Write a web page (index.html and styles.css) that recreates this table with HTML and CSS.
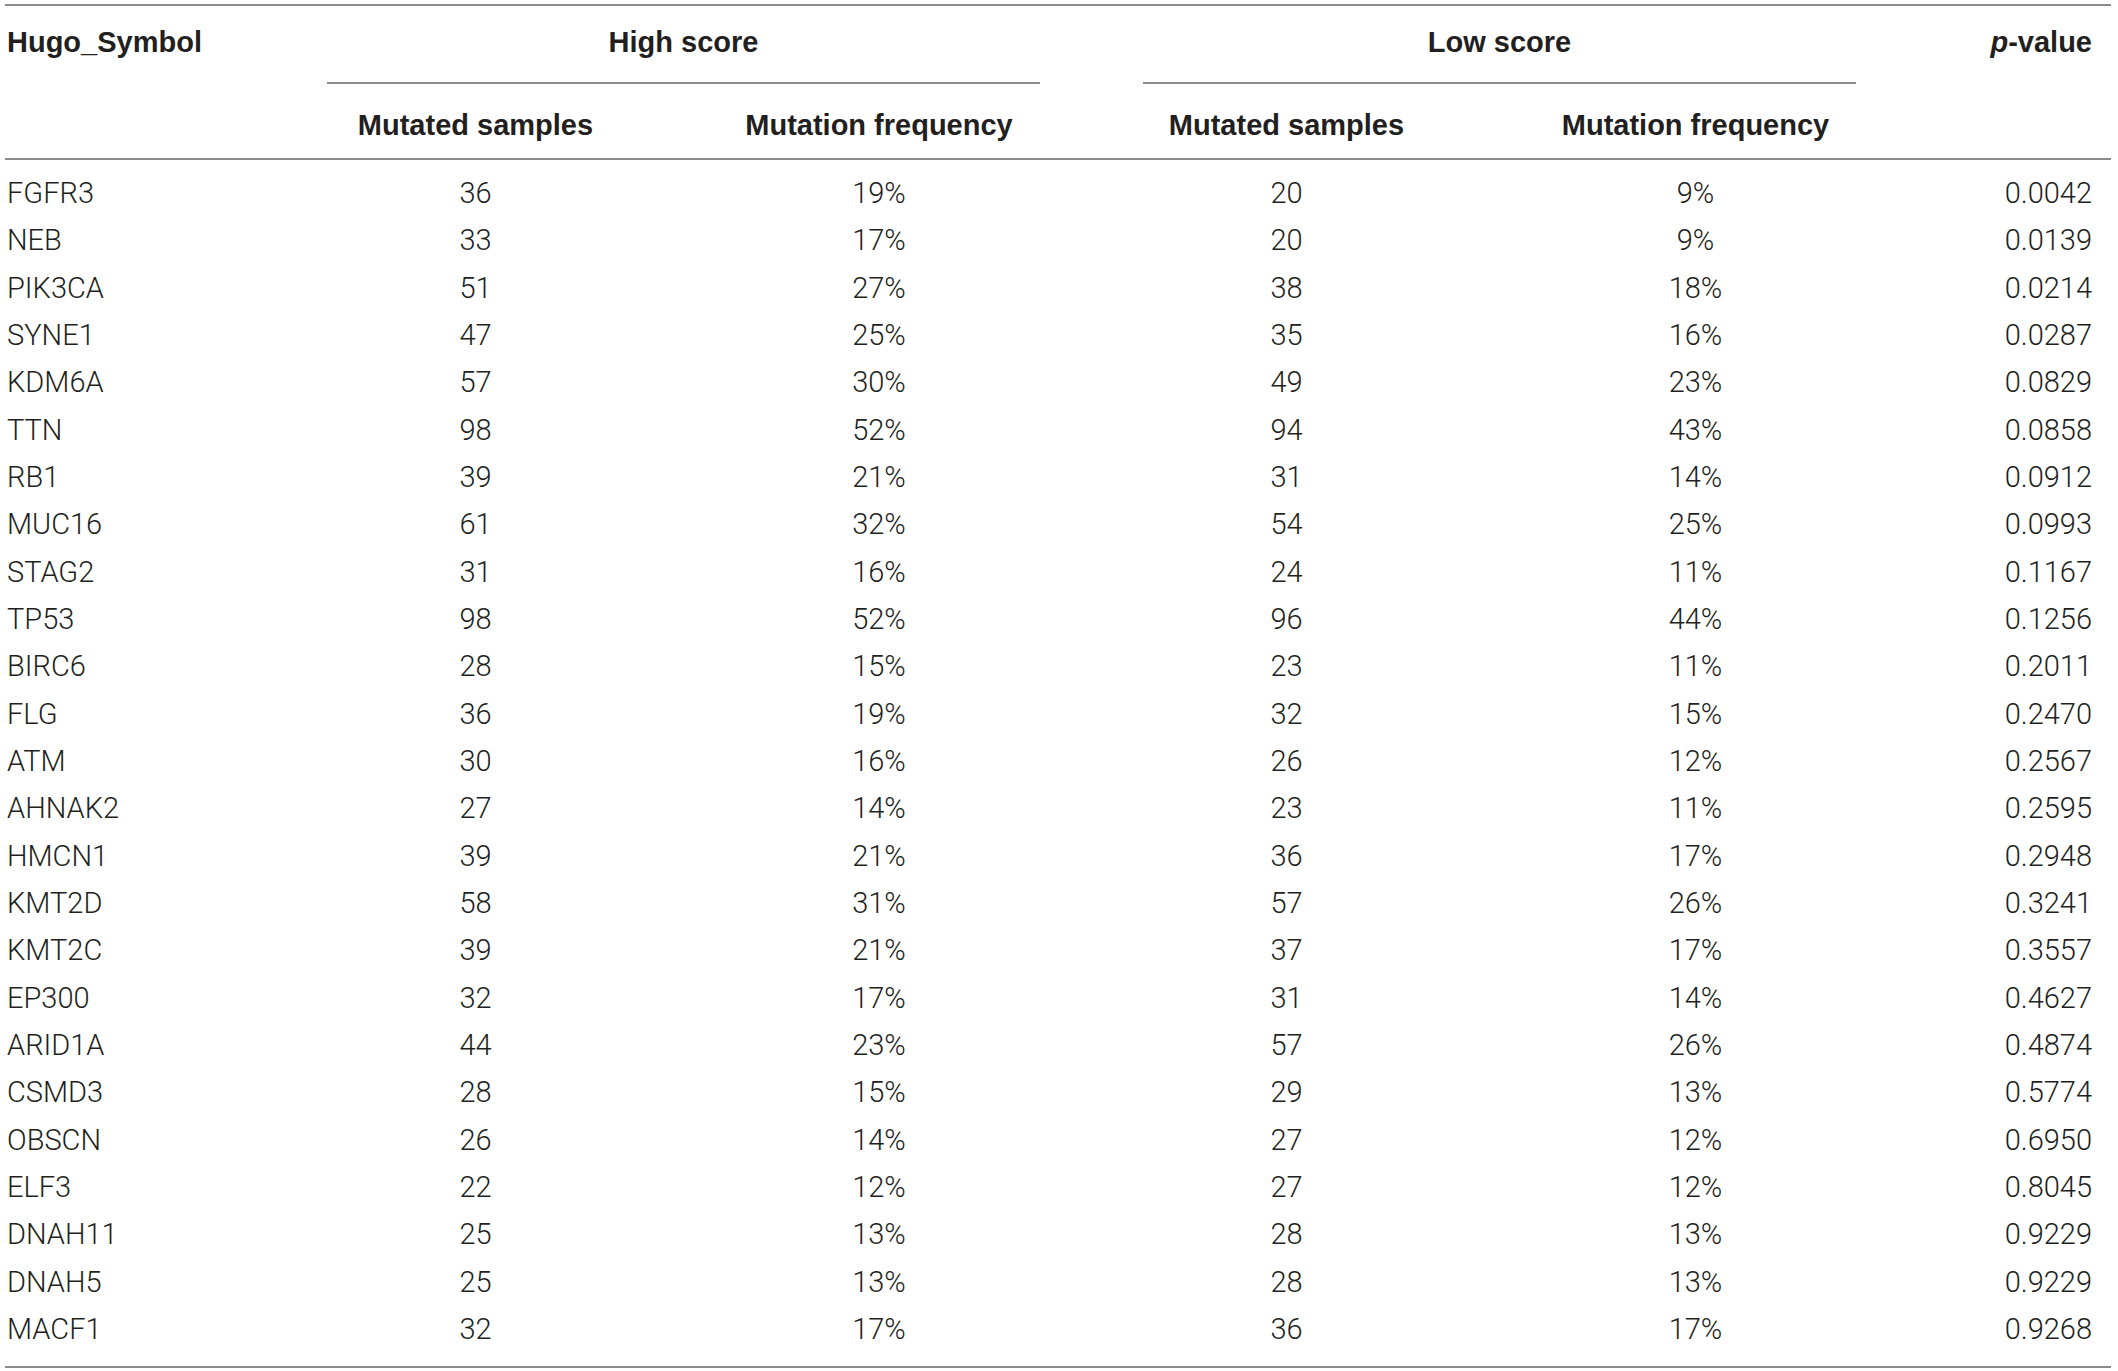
FILE: index.html
```html
<!DOCTYPE html>
<html lang="en">
<head>
    <meta charset="UTF-8">
    <meta name="viewport" content="width=device-width, initial-scale=1.0">
    <title>Mutation table</title>
    <link rel="stylesheet" href="styles.css">
</head>
<body>
    <table class="mut-table">
        <colgroup>
            <col class="col-gene">
            <col class="col-hi-n">
            <col class="col-hi-f">
            <col class="col-lo-n">
            <col class="col-lo-f">
            <col class="col-p">
        </colgroup>
        <thead>
            <tr class="head-top">
                <th class="gene" rowspan="2">Hugo_Symbol</th>
                <th colspan="2" class="group"><div class="group-rule group-high">High score</div></th>
                <th colspan="2" class="group"><div class="group-rule group-low">Low score</div></th>
                <th class="pval" rowspan="2"><i>p</i>-value</th>
            </tr>
            <tr class="head-sub">
                <th>Mutated samples</th>
                <th>Mutation frequency</th>
                <th>Mutated samples</th>
                <th>Mutation frequency</th>
            </tr>
        </thead>
        <tbody>
            <tr><td class="gene">FGFR3</td><td>36</td><td>19%</td><td>20</td><td>9%</td><td class="pval">0.0042</td></tr>
            <tr><td class="gene">NEB</td><td>33</td><td>17%</td><td>20</td><td>9%</td><td class="pval">0.0139</td></tr>
            <tr><td class="gene">PIK3CA</td><td>51</td><td>27%</td><td>38</td><td>18%</td><td class="pval">0.0214</td></tr>
            <tr><td class="gene">SYNE1</td><td>47</td><td>25%</td><td>35</td><td>16%</td><td class="pval">0.0287</td></tr>
            <tr><td class="gene">KDM6A</td><td>57</td><td>30%</td><td>49</td><td>23%</td><td class="pval">0.0829</td></tr>
            <tr><td class="gene">TTN</td><td>98</td><td>52%</td><td>94</td><td>43%</td><td class="pval">0.0858</td></tr>
            <tr><td class="gene">RB1</td><td>39</td><td>21%</td><td>31</td><td>14%</td><td class="pval">0.0912</td></tr>
            <tr><td class="gene">MUC16</td><td>61</td><td>32%</td><td>54</td><td>25%</td><td class="pval">0.0993</td></tr>
            <tr><td class="gene">STAG2</td><td>31</td><td>16%</td><td>24</td><td>11%</td><td class="pval">0.1167</td></tr>
            <tr><td class="gene">TP53</td><td>98</td><td>52%</td><td>96</td><td>44%</td><td class="pval">0.1256</td></tr>
            <tr><td class="gene">BIRC6</td><td>28</td><td>15%</td><td>23</td><td>11%</td><td class="pval">0.2011</td></tr>
            <tr><td class="gene">FLG</td><td>36</td><td>19%</td><td>32</td><td>15%</td><td class="pval">0.2470</td></tr>
            <tr><td class="gene">ATM</td><td>30</td><td>16%</td><td>26</td><td>12%</td><td class="pval">0.2567</td></tr>
            <tr><td class="gene">AHNAK2</td><td>27</td><td>14%</td><td>23</td><td>11%</td><td class="pval">0.2595</td></tr>
            <tr><td class="gene">HMCN1</td><td>39</td><td>21%</td><td>36</td><td>17%</td><td class="pval">0.2948</td></tr>
            <tr><td class="gene">KMT2D</td><td>58</td><td>31%</td><td>57</td><td>26%</td><td class="pval">0.3241</td></tr>
            <tr><td class="gene">KMT2C</td><td>39</td><td>21%</td><td>37</td><td>17%</td><td class="pval">0.3557</td></tr>
            <tr><td class="gene">EP300</td><td>32</td><td>17%</td><td>31</td><td>14%</td><td class="pval">0.4627</td></tr>
            <tr><td class="gene">ARID1A</td><td>44</td><td>23%</td><td>57</td><td>26%</td><td class="pval">0.4874</td></tr>
            <tr><td class="gene">CSMD3</td><td>28</td><td>15%</td><td>29</td><td>13%</td><td class="pval">0.5774</td></tr>
            <tr><td class="gene">OBSCN</td><td>26</td><td>14%</td><td>27</td><td>12%</td><td class="pval">0.6950</td></tr>
            <tr><td class="gene">ELF3</td><td>22</td><td>12%</td><td>27</td><td>12%</td><td class="pval">0.8045</td></tr>
            <tr><td class="gene">DNAH11</td><td>25</td><td>13%</td><td>28</td><td>13%</td><td class="pval">0.9229</td></tr>
            <tr><td class="gene">DNAH5</td><td>25</td><td>13%</td><td>28</td><td>13%</td><td class="pval">0.9229</td></tr>
            <tr><td class="gene">MACF1</td><td>32</td><td>17%</td><td>36</td><td>17%</td><td class="pval">0.9268</td></tr>
        </tbody>
    </table>
</body>
</html>
```

FILE: styles.css
```css
body {
    margin: 0;
    background: #ffffff;
    color: #231f20;
}

.mut-table {
    width: 2106px;
    margin: 4px 0 0 5px;
    border-collapse: collapse;
    table-layout: fixed;
    border-top: 2px solid #8c8c8c;
    border-bottom: 2px solid #8c8c8c;
    font-family: Roboto, "Liberation Sans", sans-serif;
    font-size: 29px;
}

.col-gene { width: 270px; }
.col-hi-n { width: 401px; }
.col-hi-f { width: 406px; }
.col-lo-n { width: 409px; }
.col-lo-f { width: 409px; }
.col-p { width: 211px; }

th {
    font-family: "Liberation Sans", Arial, sans-serif;
    font-weight: bold;
    line-height: 34px;
    text-align: center;
    padding: 0;
}

.head-top th {
    padding-top: 19px;
    vertical-align: top;
}

.head-sub th {
    padding-top: 24px;
    padding-bottom: 16px;
    border-bottom: 2px solid #8c8c8c;
}

.mut-table th.gene,
.mut-table th.pval {
    border-bottom: 2px solid #8c8c8c;
}

.group-rule {
    padding-bottom: 23px;
    border-bottom: 2px solid #8c8c8c;
}

.group-high {
    margin: 0 42px 0 52px;
}

.group-low {
    margin: 0 44px 0 61px;
}

td {
    font-weight: 300;
    line-height: 47.33px;
    text-align: center;
    padding: 0;
}

.gene {
    text-align: left;
    padding-left: 2px;
}

.pval {
    text-align: right;
    padding-right: 19px;
}

tbody tr:first-child td {
    padding-top: 10px;
}

tbody tr:last-child td {
    padding-bottom: 13px;
}
```
